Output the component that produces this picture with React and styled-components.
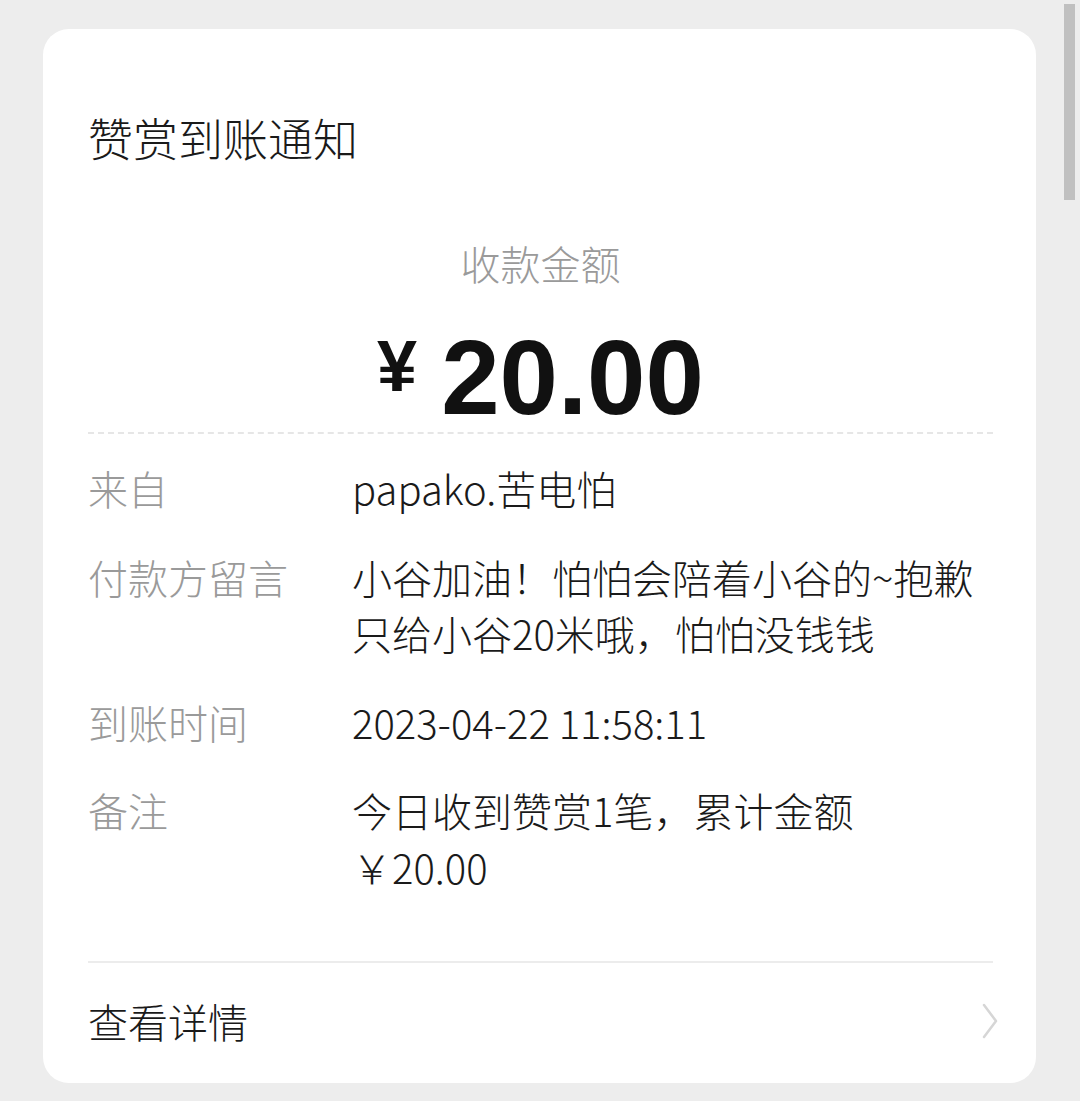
import styled, { createGlobalStyle } from "styled-components";

const GlobalStyle = createGlobalStyle`
  html, body {
    margin: 0;
    padding: 0;
    background: #ededed;
  }
  body {
    font-family: "Noto Sans CJK SC", "Noto Sans", sans-serif;
    font-weight: 300;
  }
`;

const Page = styled.div`
  position: relative;
  min-height: 1101px;
  box-sizing: border-box;
  padding: 29px 44px 21px 43px;
`;

const ScrollThumb = styled.div`
  position: absolute;
  top: 4px;
  right: 5px;
  width: 11px;
  height: 196px;
  background: #c0c0c0;
`;

const Card = styled.section`
  background: #fff;
  border-radius: 26px;
  padding: 77px 43px 34px 45px;
  color: #1a1a1a;
`;

const Title = styled.h1`
  margin: 0;
  font-size: 45px;
  line-height: 64px;
  font-weight: 300;
`;

const AmountBlock = styled.div`
  display: flex;
  flex-direction: column;
  align-items: center;
  margin-top: 65px;
`;

const AmountLabel = styled.div`
  font-size: 40px;
  line-height: 56px;
  color: #9a9a9a;
`;

const Amount = styled.div`
  display: flex;
  align-items: baseline;
  gap: 24px;
  margin-top: 34px;
  font-family: "Liberation Sans", "Noto Sans", sans-serif;
  font-weight: 700;
  line-height: 1;
  color: #111;
`;

const Yen = styled.span`
  font-size: 72px;
  position: relative;
  top: -23px;
`;

const Digits = styled.span`
  font-size: 105px;
`;

const Dashed = styled.div`
  margin-top: 2px;
  height: 0;
  border-top: 2px dashed #e6e6e6;
`;

const Rows = styled.dl`
  display: flex;
  flex-direction: column;
  gap: 32px;
  margin: 26px 0 0;
`;

const Row = styled.div`
  display: grid;
  grid-template-columns: 264px 1fr;
  font-size: 40px;
  line-height: 56.5px;
`;

const Label = styled.dt`
  color: #9a9a9a;
`;

const Value = styled.dd`
  margin: 0;
  color: #1a1a1a;
`;

const Line = styled.div`
  white-space: nowrap;
`;

const Divider = styled.hr`
  margin: 66px 0 0;
  border: 0;
  border-top: 2px solid #ececec;
`;

const DetailLink = styled.div`
  display: flex;
  align-items: center;
  justify-content: space-between;
  margin-top: 30px;
  font-size: 40px;
  line-height: 56px;
`;

const ChevronIcon = styled.svg`
  margin-right: -6px;
`;

const Chevron = () => (
  <ChevronIcon width="18" height="36" viewBox="0 0 18 36" fill="none">
    <path d="M3 2 L15 18 L3 34" stroke="#d6d6d6" strokeWidth="2.5" strokeLinecap="round" strokeLinejoin="round" />
  </ChevronIcon>
);

const rows = [
  { label: "来自", lines: ["papako.苦电怕"] },
  { label: "付款方留言", lines: ["小谷加油！怕怕会陪着小谷的~抱歉", "只给小谷20米哦，怕怕没钱钱"] },
  { label: "到账时间", lines: ["2023-04-22 11:58:11"] },
  { label: "备注", lines: ["今日收到赞赏1笔，累计金额", "￥20.00"] },
];

export default function App() {
  return (
    <Page>
      <GlobalStyle />
      <ScrollThumb />
      <Card>
        <Title>赞赏到账通知</Title>
        <AmountBlock>
          <AmountLabel>收款金额</AmountLabel>
          <Amount>
            <Yen>¥</Yen>
            <Digits>20.00</Digits>
          </Amount>
        </AmountBlock>
        <Dashed />
        <Rows>
          {rows.map((r) => (
            <Row key={r.label}>
              <Label>{r.label}</Label>
              <Value>
                {r.lines.map((l) => (
                  <Line key={l}>{l}</Line>
                ))}
              </Value>
            </Row>
          ))}
        </Rows>
        <Divider />
        <DetailLink>
          <span>查看详情</span>
          <Chevron />
        </DetailLink>
      </Card>
    </Page>
  );
}
